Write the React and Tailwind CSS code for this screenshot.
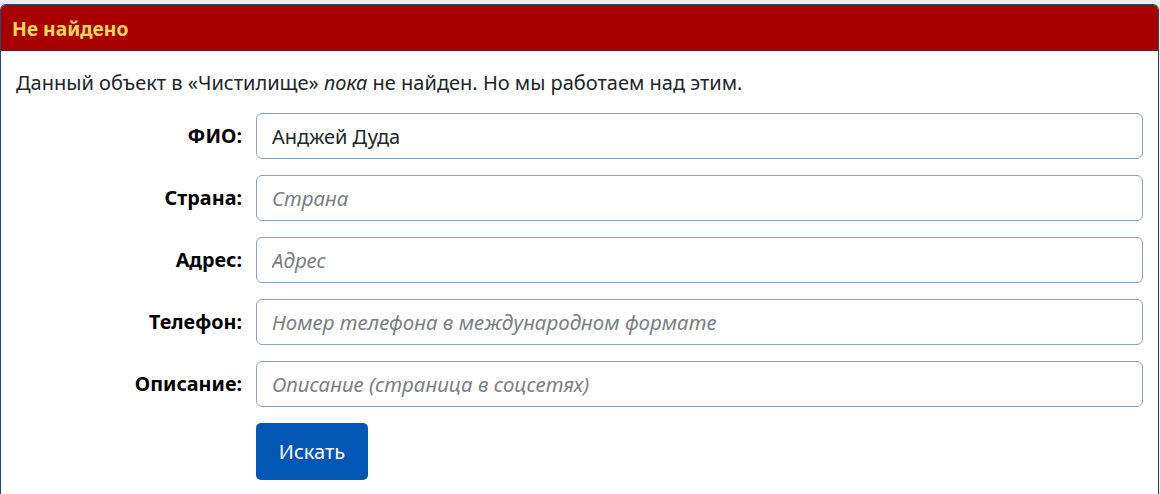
import { useState } from "react";

const fields = [
  { id: "fio", label: "ФИО:", placeholder: "ФИО", value: "Анджей Дуда" },
  { id: "country", label: "Страна:", placeholder: "Страна" },
  { id: "address", label: "Адрес:", placeholder: "Адрес" },
  { id: "phone", label: "Телефон:", placeholder: "Номер телефона в международном формате" },
  { id: "about", label: "Описание:", placeholder: "Описание (страница в соцсетях)" },
];

function App() {
  const [values, setValues] = useState(
    Object.fromEntries(fields.map((f) => [f.id, f.value || ""]))
  );

  return (
    <div
      className="min-h-[494px] bg-[#e9ecef] pt-[4px] pr-[1px]"
      style={{ fontFamily: '"Noto Sans", "Open Sans", sans-serif' }}
    >
      <div className="h-[490px] overflow-hidden rounded-t-[6px] border-x border-t border-[#1d4a72] bg-white">
        <div className="flex h-[46px] items-center border-b border-[#7a1530] bg-[#a80000] px-[11px] pt-[3px]">
          <h2 className="text-[19.3px] font-bold text-[#ffd95a]">Не найдено</h2>
        </div>

        <div className="px-[15px] pt-[18px]">
          <p className="text-[20px] leading-[28px] text-[#212529]">
            Данный объект в «Чистилище» <em>пока</em> не найден. Но мы работаем над этим.
          </p>

          <form
            className="mt-[16px] flex flex-col gap-[16px]"
            onSubmit={(e) => e.preventDefault()}
          >
            {fields.map((f) => (
              <div key={f.id} className="flex items-center">
                <label
                  htmlFor={f.id}
                  className="w-[240px] shrink-0 pr-[14px] text-right text-[19.8px] font-bold text-black"
                >
                  {f.label}
                </label>
                <input
                  id={f.id}
                  value={values[f.id]}
                  onChange={(e) => setValues({ ...values, [f.id]: e.target.value })}
                  placeholder={f.placeholder}
                  className="h-[46px] flex-1 rounded-[6px] border border-[#8aa2c4] px-[15px] text-[20px] text-[#212529] outline-none placeholder:text-[20.5px] placeholder:italic placeholder:text-[#7b7f83]"
                />
              </div>
            ))}

            <div className="flex pl-[240px]">
              <button
                type="submit"
                className="h-[57px] w-[112px] rounded-[5px] bg-[#0256b6] text-[20px] text-white"
              >
                Искать
              </button>
            </div>
          </form>
        </div>
      </div>
    </div>
  );
}

export default App;
